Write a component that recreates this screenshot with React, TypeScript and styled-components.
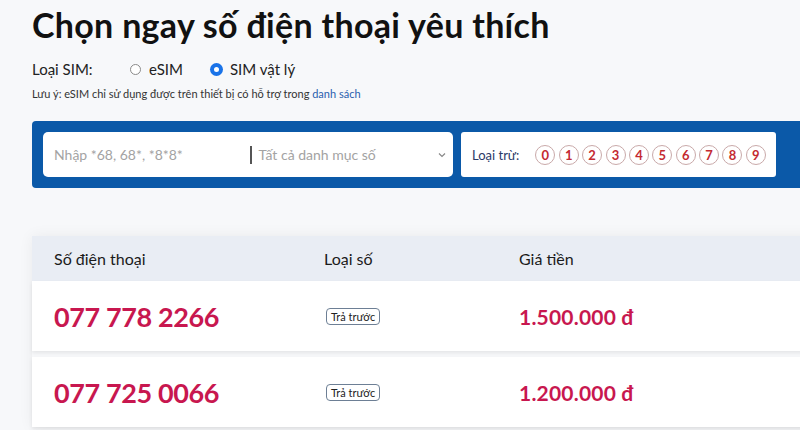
import React from "react";
import styled, { createGlobalStyle } from "styled-components";

const GlobalStyle = createGlobalStyle`
  html, body {
    margin: 0;
    padding: 0;
    background: #f7f8fa;
    overflow: hidden;
    font-family: "Lato", "Liberation Sans", sans-serif;
    color: #141414;
  }
`;

const Page = styled.div`
  width: 840px;
  padding: 5px 0 0 32px;
`;

const Title = styled.h1`
  margin: 0;
  font-size: 34px;
  font-weight: 700;
  line-height: 40px;
  letter-spacing: 0.3px;
  color: #111;
`;

const SimRow = styled.div`
  display: flex;
  align-items: center;
  margin-top: 14px;
  height: 20px;
  font-size: 15px;
`;

const SimLabel = styled.span`
  width: 98px;
  color: #222;
`;

const Radio = styled.label<{ $checked?: boolean }>`
  display: flex;
  align-items: center;
  gap: 8px;
  margin-right: 28px;
  color: #222;
  &::before {
    content: "";
    width: 11px;
    height: 11px;
    border-radius: 50%;
    box-sizing: border-box;
    border: ${p => p.$checked ? "3px solid #1a73e8" : "1px solid #8a8a8a"};
    background: #fff;
    box-shadow: ${p => p.$checked ? "0 0 0 1px #1a73e8" : "none"};
  }
`;

const Note = styled.p`
  margin: 8px 0 0;
  font-size: 11px;
  color: #333;
  a {
    color: #2a5fae;
    text-decoration: none;
  }
`;

const SearchBar = styled.div`
  display: flex;
  gap: 8px;
  margin-top: 21px;
  padding: 11px 11px;
  height: 45px;
  background: #0b59a8;
  border-radius: 4px 0 0 4px;
`;

const InputBox = styled.div`
  display: flex;
  align-items: center;
  width: 410px;
  background: #fff;
  border-radius: 5px;
  font-size: 14px;
`;

const Placeholder = styled.span<{ $w?: number }>`
  flex: ${p => p.$w ? `0 0 ${p.$w}px` : 1};
  padding-left: ${p => p.$w ? 11 : 7}px;
  color: #a3a3a3;
`;

const Divider = styled.span`
  width: 1.5px;
  height: 18px;
  background: #555;
`;

const Chevron = styled.svg`
  margin-right: 6px;
`;

const ExcludeBox = styled.div`
  display: flex;
  align-items: center;
  width: 315px;
  padding-left: 11px;
  box-sizing: border-box;
  background: #fff;
  border-radius: 3px;
  font-size: 13px;
  color: #2b3a67;
`;

const Digits = styled.div`
  display: flex;
  gap: 3.4px;
  margin-left: 16px;
`;

const Digit = styled.span`
  display: flex;
  align-items: center;
  justify-content: center;
  width: 20px;
  height: 20px;
  box-sizing: border-box;
  border: 1px solid #c9a9a9;
  border-radius: 50%;
  font-size: 13px;
  font-weight: 700;
  color: #c42a31;
`;

const Table = styled.div`
  margin-top: 48px;
  box-shadow: 0 0 14px rgba(0, 0, 0, 0.06);
`;

const Columns = styled.div`
  display: grid;
  grid-template-columns: 270px 195px 1fr;
  align-items: center;
  padding-left: 22px;
`;

const Header = styled(Columns)`
  height: 45px;
  background: #e9edf4;
  font-size: 16px;
  color: #1b1b1b;
`;

const Row = styled(Columns)`
  height: 70px;
  background: #fff;
  margin-bottom: 6px;
  box-shadow: 0 2px 4px rgba(0, 0, 0, 0.08);
`;

const Phone = styled.span`
  font-size: 27px;
  font-weight: 700;
  color: #c8174f;
  letter-spacing: -0.4px;
`;

const Tag = styled.span`
  justify-self: start;
  margin-left: 2px;
  padding: 1px 4px;
  border: 1px solid #6d7f95;
  border-radius: 4px;
  font-size: 11px;
  color: #222;
`;

const Price = styled.span`
  font-size: 21px;
  font-weight: 700;
  color: #c8174f;
  letter-spacing: 0.2px;
`;

const rows = [
  { phone: "077 778 2266", price: "1.500.000 đ" },
  { phone: "077 725 0066", price: "1.200.000 đ" },
];

export default function App() {
  return (
    <Page>
      <GlobalStyle/>
      <Title>Chọn ngay số điện thoại yêu thích</Title>
      <SimRow>
        <SimLabel>Loại SIM:</SimLabel>
        <Radio>eSIM</Radio>
        <Radio $checked>SIM vật lý</Radio>
      </SimRow>
      <Note>Lưu ý: eSIM chỉ sử dụng được trên thiết bị có hỗ trợ trong <a href="#">danh sách</a></Note>
      <SearchBar>
        <InputBox>
          <Placeholder $w={196}>Nhập *68, 68*, *8*8*</Placeholder>
          <Divider/>
          <Placeholder>Tất cả danh mục số</Placeholder>
          <Chevron width="10" height="10" viewBox="0 0 10 10">
            <path d="M2 3.5 L5 6.5 L8 3.5" fill="none" stroke="#888" strokeWidth="1.2"/>
          </Chevron>
        </InputBox>
        <ExcludeBox>
          Loại trừ:
          <Digits>
            {[0, 1, 2, 3, 4, 5, 6, 7, 8, 9].map(d => <Digit key={d}>{d}</Digit>)}
          </Digits>
        </ExcludeBox>
      </SearchBar>
      <Table>
        <Header>
          <span>Số điện thoại</span>
          <span>Loại số</span>
          <span>Giá tiền</span>
        </Header>
        {rows.map(r => (
          <Row key={r.phone}>
            <Phone>{r.phone}</Phone>
            <Tag>Trả trước</Tag>
            <Price>{r.price}</Price>
          </Row>
        ))}
      </Table>
    </Page>
  );
}
